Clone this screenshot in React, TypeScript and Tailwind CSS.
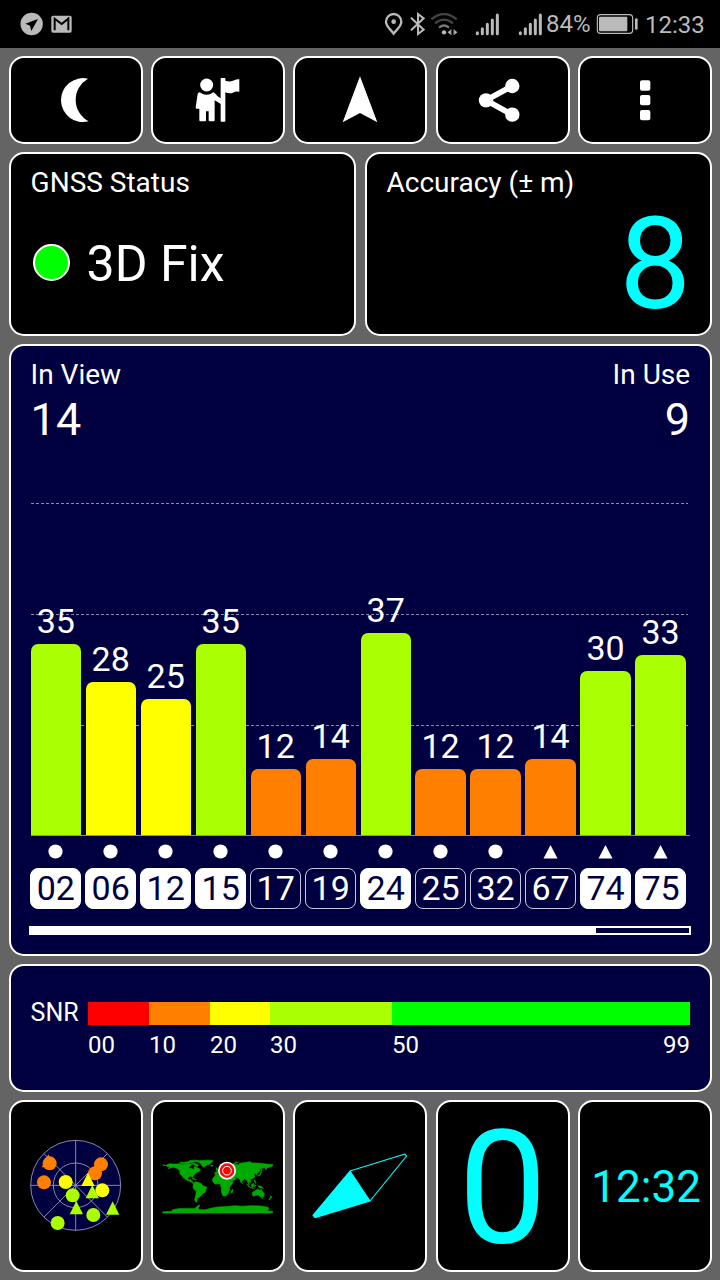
import React from "react"

interface Satellite {
    id: string;
    snr: number;
    used: boolean;
    glonass?: boolean;
}

const satellites: Satellite[] = [
    { id: "02", snr: 35, used: true },
    { id: "06", snr: 28, used: true },
    { id: "12", snr: 25, used: true },
    { id: "15", snr: 35, used: true },
    { id: "17", snr: 12, used: false },
    { id: "19", snr: 14, used: false },
    { id: "24", snr: 37, used: true },
    { id: "25", snr: 12, used: false },
    { id: "32", snr: 12, used: false },
    { id: "67", snr: 14, used: false, glonass: true },
    { id: "74", snr: 30, used: true, glonass: true },
    { id: "75", snr: 33, used: true, glonass: true },
]

// pixels per dB in the bar chart
const SCALE = 5.46

function barColor(snr: number) {
    if (snr < 10) return "bg-[#ff0000]"
    if (snr < 20) return "bg-[#ff8000]"
    if (snr < 30) return "bg-[#ffff00]"
    if (snr < 50) return "bg-[#aaff00]"
    return "bg-[#00ff00]"
}

const legend = [
    { label: "00", color: "bg-[#ff0000]", width: "w-[61px]" },
    { label: "10", color: "bg-[#ff8000]", width: "w-[61px]" },
    { label: "20", color: "bg-[#ffff00]", width: "w-[60px]" },
    { label: "30", color: "bg-[#aaff00]", width: "w-[122px]" },
    { label: "50", color: "bg-[#00ff00]", width: "w-[298px]" },
]

// [longitude, -latitude] outlines
const land = [
    "-180,-67 -168,-66 -162,-70 -156,-71 -140,-70 -125,-71 -115,-69 -95,-72 -85,-69 -94,-60 -92,-57 -82,-55 -80,-51 -77,-57 -77,-62 -70,-60 -65,-58 -56,-52 -60,-46 -66,-44 -70,-42 -76,-35 -81,-31 -80,-25 -83,-29 -90,-30 -97,-27 -97,-20 -94,-18 -91,-19 -88,-21 -88,-16 -83,-15 -83,-10 -78,-8 -82,-7 -87,-12 -95,-15 -105,-20 -112,-29 -115,-31 -110,-23 -117,-33 -123,-38 -124,-48 -132,-56 -145,-60 -153,-58 -162,-55 -157,-59 -165,-62 -168,-65",
    "-125,-74 -115,-77 -112,-75 -100,-78 -90,-79 -92,-82 -70,-83 -62,-82 -80,-76 -95,-74 -110,-72 -118,-72",
    "-88,-73 -75,-73 -62,-66 -68,-62 -75,-65 -74,-68 -85,-70",
    "-72,-78 -55,-82 -30,-83 -15,-81 -20,-75 -25,-70 -40,-65 -44,-60 -52,-65 -55,-70 -60,-76",
    "-24,-65 -16,-66 -14,-65 -19,-63",
    "-84,-22 -80,-23 -74,-20 -69,-19 -75,-20",
    "-78,-8 -72,-12 -62,-10 -52,-5 -50,0 -44,2 -35,6 -39,14 -41,22 -48,26 -53,33 -58,35 -58,38 -65,41 -67,46 -69,52 -67,55 -73,53 -75,46 -73,37 -71,28 -70,18 -76,14 -81,6 -80,-1",
    "-17,-15 -17,-21 -10,-30 -6,-36 10,-37 11,-33 20,-31 32,-31 35,-28 38,-20 43,-12 51,-12 46,-4 41,2 39,7 40,15 35,20 35,24 32,29 27,34 18,34 14,27 12,17 13,8 9,1 9,-4 4,-6 -8,-4 -13,-9",
    "49,12 50,16 47,25 44,24 44,17",
    "-9,-43 -9,-37 -2,-37 3,-42 9,-44 16,-38 18,-40 13,-45 20,-40 23,-37 27,-41 27,-37 36,-36 34,-30 39,-21 43,-13 55,-18 60,-22 57,-25 50,-30 62,-25 68,-24 73,-18 77,-8 80,-15 88,-22 94,-18 98,-15 99,-7 104,-1 103,-5 100,-13 105,-9 109,-12 106,-20 110,-21 120,-26 121,-32 119,-37 125,-40 126,-34 129,-36 128,-40 135,-44 141,-53 137,-54 155,-59 157,-51 163,-58 170,-60 180,-64 180,-69 160,-70 140,-73 113,-74 105,-78 90,-75 73,-73 68,-68 55,-69 42,-67 40,-64 33,-67 41,-67 30,-71 20,-70 10,-63 5,-59 11,-59 16,-56 18,-60 24,-65 22,-61 29,-60 22,-57 14,-54 8,-54 2,-51 -4,-48 -1,-44",
    "-5,-50 1,-51 0,-54 -3,-58 -6,-58 -4,-54",
    "52,-71 58,-76 68,-77 58,-73 56,-71",
    "130,-31 135,-34 140,-35 141,-45 145,-44 141,-40 142,-36 136,-33",
    "142,-46 144,-50 142,-54",
    "95,-5 105,4 106,6 102,4",
    "106,6 115,8 120,9 114,9",
    "109,-1 117,-7 119,-4 116,4 111,3",
    "120,-1 125,-1 122,2 123,5 120,5",
    "120,-18 122,-18 126,-8 124,-7 121,-13",
    "80,-10 82,-7 80,-6",
    "131,1 141,2 150,10 143,8 138,8",
    "114,22 122,18 130,12 136,12 136,15 140,17 142,11 146,19 153,27 150,37 145,39 140,37 135,33 130,31 118,35 115,34",
    "145,41 148,41 147,44",
    "173,34 178,38 175,41 173,40",
    "172,41 174,42 168,47 167,45",
    "-180,86 -150,84 -148,79 -125,75 -100,75 -75,75 -62,64 -58,65 -64,74 -60,79 -40,79 -20,74 0,70 30,69 55,66 80,68 110,66 140,67 165,71 168,77 160,82 180,85 180,90 -180,90",
]

function StatusBar() {
    return (
        <div className="h-12 bg-black flex items-center pl-5 text-[#bababa] text-2xl leading-none">
            <svg className="w-[53px] h-6" viewBox="60 37 159 72">
                <circle cx="95" cy="73" r="33.500" fill="#bababa" />
                <path d="M76 72 L114 58 L94 94 L90 78 Z" fill="black" />
                <rect x="154" y="48" width="61" height="51" rx="5" fill="#bababa" />
                <path d="M164 92 V57 L185 73 L205 57 V92" fill="none" stroke="black" strokeWidth="6" />
            </svg>
            <div className="ml-auto w-[337px] flex items-center">
                <svg className="w-[160px] h-6" viewBox="39 36 480 72" fill="none" stroke="#bababa">
                    <path d="M71 101 C62 88 48 79 48 65 A23 23 0 0 1 94 65 C94 79 80 88 71 101 Z" strokeWidth="7" />
                    <circle cx="71" cy="65" r="7" fill="#bababa" stroke="none" />
                    <path d="M123 53 L161 89 L144 102 V42 L161 55 L123 91" strokeWidth="6" />
                    <g stroke="#444444" strokeWidth="6.500">
                        <path d="M184 58 Q222 27 260 58" />
                        <path d="M195 70 Q222 48 249 70" />
                        <path d="M207 83 Q222 70 237 83" stroke="#777777" />
                    </g>
                    <circle cx="222" cy="97" r="6.500" fill="#bababa" stroke="none" />
                    <path d="M233 97 L242 89 V104 Z M262 97 L253 89 V104 Z" fill="#bababa" stroke="none" />
                    <path d="M243 88 V105 M252 88 V105" strokeWidth="2.500" />
                    <g strokeWidth="9" strokeLinecap="round">
                        <path d="M322 98 V101 M337 86 V101 M352 73 V101 M367 60 V101 M382 45 V101" />
                        <path d="M451 98 V101 M466 86 V101 M481 73 V101 M496 60 V101 M511 45 V101" />
                    </g>
                </svg>
                <span className="ml-[3px] w-[50px]">84%</span>
                <svg className="w-11 h-6" viewBox="678 37 132 72">
                    <rect x="682" y="45" width="106" height="56" rx="10" fill="none" stroke="#bababa" strokeWidth="3.500" />
                    <rect x="687" y="51" width="85" height="44" rx="3" fill="#bababa" />
                    <rect x="795" y="56" width="8" height="34" rx="3" fill="#bababa" />
                </svg>
                <span className="ml-[5px] mt-px">12:33</span>
            </div>
        </div>
    )
}

function Tile({ children }: { children: React.ReactNode }) {
    return (
        <div className="bg-black border-2 border-white rounded-[15px] flex items-center justify-center">
            {children}
        </div>
    )
}

function Toolbar() {
    return (
        <div className="grid grid-cols-5 gap-x-[8.400px] h-[88px]">
            <Tile>
                <svg className="w-full h-full" viewBox="33 174 390 252" fill="white">
                    <path d="M264 236 A66 66 0 1 0 266 364 A73 73 0 0 1 264 236 Z" />
                </svg>
            </Tile>
            <Tile>
                <svg className="w-full h-full" viewBox="40 24 390 252" fill="white">
                    <circle cx="201" cy="105" r="19.500" />
                    <path d="M180 127 Q201 142 221 127 Q228 130 233 138 L245 146 V163 L225 151 V211 Q225 214 222 214 H210 Q207 214 207 211 V184 H199 V211 Q199 214 196 214 H182 Q179 214 179 211 V176 H171 Q168 176 168 172 L174 132 Q176 127 180 127 Z" />
                    <rect x="243" y="84" width="14" height="131" rx="2" />
                    <path d="M256 92 Q270 97 280 92 Q290 86 299 88 V125 Q288 123 280 128 Q268 133 256 126 Z" />
                </svg>
            </Tile>
            <Tile>
                <svg className="w-full h-full" viewBox="467 24 390 252" fill="white">
                    <path d="M662 79 L714 217 L662 189 L610 217 Z" />
                </svg>
            </Tile>
            <Tile>
                <svg className="w-full h-full" viewBox="24 24 390 252" fill="white">
                    <path d="M247 108 L168 151 L247 194" fill="none" stroke="white" strokeWidth="17" />
                    <circle cx="168" cy="151" r="21.500" />
                    <circle cx="247" cy="108" r="21.500" />
                    <circle cx="247" cy="194" r="21.500" />
                </svg>
            </Tile>
            <Tile>
                <svg className="w-full h-full" viewBox="451 24 390 252" fill="white">
                    <rect x="631" y="91" width="31" height="31" rx="6" />
                    <rect x="631" y="135" width="31" height="31" rx="6" />
                    <rect x="631" y="180" width="31" height="31" rx="6" />
                </svg>
            </Tile>
        </div>
    )
}

function SnrChart() {
    return (
        <div>
            <div className="relative h-[334px] border-b border-[#8888a8]">
                <svg className="absolute left-0 top-0 w-full h-[334px]" stroke="#8a8aac" strokeDasharray="3 2">
                    <line x1="0" x2="657" y1="1.500" y2="1.500" />
                    <line x1="0" x2="657" y1="112.500" y2="112.500" />
                    <line x1="0" x2="657" y1="223.500" y2="223.500" />
                </svg>
                <div className="relative h-full flex gap-[4.700px] items-end">
                    {satellites.map(sat => (
                        <div key={sat.id} className="w-[50.300px] shrink-0 text-center text-[34px] leading-none">
                            <div className="mb-[6px]">{sat.snr}</div>
                            <div className={"rounded-t-[7px] " + barColor(sat.snr)} style={{ height: sat.snr * SCALE }} />
                        </div>
                    ))}
                </div>
            </div>
            <div className="flex gap-[3.700px] -ml-[0.500px] mt-2">
                {satellites.map(sat => (
                    <div key={sat.id} className="w-[51.300px] shrink-0 flex flex-col items-center">
                        <svg className="size-[15px]" viewBox="0 0 15 15" fill="white">
                            {sat.glonass ? <path d="M7.500 1 L14.500 14.500 H0.500 Z" /> : <circle cx="7.500" cy="7.500" r="7.100" />}
                        </svg>
                        <div className={"mt-[9px] w-full h-[41px] rounded-[8px] border text-[34px] leading-none text-center pt-[2px] " +
                            (sat.used ? "bg-white border-white text-[#000040]" : "border-[#c8c8dc]")}>
                            {sat.id}
                        </div>
                    </div>
                ))}
            </div>
        </div>
    )
}

function SkyPlot() {
    return (
        <svg className="w-full h-full" viewBox="33 21 390 504">
            <g fill="none" stroke="#a0a0c8" strokeWidth="2.500">
                <circle cx="227" cy="271" r="135" fill="#000040" />
                <circle cx="227" cy="271" r="67" />
                <path d="M92 271 H362 M227 136 V406 M132 176 L322 366 M322 176 L132 366" />
            </g>
            <g fill="#ff8000">
                <path d="M145 178 L164 217 H125 Z" />
                <circle cx="149" cy="205" r="21" />
                <circle cx="132" cy="262" r="21" />
                <circle cx="285" cy="235" r="21" />
                <circle cx="303" cy="208" r="21" />
            </g>
            <g fill="#ffff00">
                <circle cx="197" cy="261" r="21" />
                <path d="M264 233 L284 273 H244 Z" />
                <circle cx="307" cy="286" r="21" />
            </g>
            <g fill="#aaff00">
                <circle cx="218" cy="301" r="21" />
                <path d="M277 270 L297 310 H257 Z" />
                <path d="M229 318 L249 358 H209 Z" />
                <path d="M338 319 L358 359 H318 Z" />
                <circle cx="280" cy="360" r="21" />
                <circle cx="173" cy="384" r="21" />
            </g>
        </svg>
    )
}

function WorldMap() {
    return (
        <svg className="w-full h-full" viewBox="460 21 390 504">
            <g transform="translate(654 271.500) scale(0.917)" fill="#00aa00" stroke="#00aa00" strokeWidth="2">
                {land.map((points, i) => <polygon key={i} points={points} />)}
            </g>
            <circle cx="682" cy="227" r="27" fill="white" />
            <circle cx="682" cy="227" r="22" fill="#ee1111" />
            <circle cx="682" cy="227" r="13" fill="#ff0000" stroke="white" strokeWidth="3" />
        </svg>
    )
}

export default function App() {
    return (
        <div className="w-[720px] h-[1280px] bg-[#646464] text-white font-['Roboto',sans-serif] overflow-hidden">
            <StatusBar />
            <div className="ml-[8.600px] w-[703.500px] pt-2 flex flex-col gap-2">
                <Toolbar />

                <div className="grid grid-cols-2 gap-x-[8.400px] h-[184px]">
                    <div className="bg-black border-2 border-white rounded-[15px] pl-5 pt-[15px]">
                        <div className="text-[28px] leading-none">GNSS Status</div>
                        <div className="flex items-center mt-[42px] pl-[2px]">
                            <div className="size-[37px] mb-[4px] rounded-full bg-[#00ff00] border-2 border-white" />
                            <div className="ml-[17px] text-[50px] leading-none">3D Fix</div>
                        </div>
                    </div>
                    <div className="bg-black border-2 border-white rounded-[15px] px-5 pt-[15px]">
                        <div className="text-[28px] leading-none">Accuracy (± m)</div>
                        <div className="mt-[3px] -mr-px text-right text-[128px] leading-none text-[#00ffff]">8</div>
                    </div>
                </div>

                <div className="h-[612px] bg-[#000040] border-2 border-white rounded-[15px] px-5 pt-[15px]">
                    <div className="flex justify-between text-[28px] leading-none">
                        <div>In View</div>
                        <div>In Use</div>
                    </div>
                    <div className="flex justify-between mt-2 text-[45px] leading-none">
                        <div>14</div>
                        <div>9</div>
                    </div>
                    <div className="mt-[60px]">
                        <SnrChart />
                    </div>
                    <div className="-ml-[1.200px] mt-[17px] w-[662px] h-[9px] border-2 border-white">
                        <div className="w-[565px] h-full bg-white" />
                    </div>
                </div>

                <div className="h-[128px] bg-[#000040] border-2 border-white rounded-[15px] px-5 pt-9 flex text-[24px] leading-none">
                    <div className="w-[57.400px] -mt-[2px] text-[25px] leading-none">SNR</div>
                    <div className="relative">
                        <div className="flex">
                            {legend.map(step => (
                                <div key={step.label} className={step.width}>
                                    <div className={"h-[23px] " + step.color} />
                                    <div className="mt-2">{step.label}</div>
                                </div>
                            ))}
                        </div>
                        <div className="absolute right-0 top-[31px]">99</div>
                    </div>
                </div>

                <div className="grid grid-cols-5 gap-x-[8.400px] h-[172px]">
                    <Tile><SkyPlot /></Tile>
                    <Tile><WorldMap /></Tile>
                    <Tile>
                        <svg className="w-full h-full" viewBox="32 21 390 504" stroke="#00ffff" strokeWidth="3.500" strokeLinejoin="round">
                            <path d="M197 228 L257 318 L92 368 L86 361 Z" fill="#00ffff" />
                            <path d="M197 228 L362 177 L367 183 L257 318" fill="none" />
                        </svg>
                    </Tile>
                    <Tile>
                        <div className="mt-1 text-[158px] leading-none text-[#00ffff]">0</div>
                    </Tile>
                    <Tile>
                        <div className="mt-[2px] ml-[2px] text-[44px] leading-none text-[#00ffff]">12:32</div>
                    </Tile>
                </div>
            </div>
        </div>
    )
}
